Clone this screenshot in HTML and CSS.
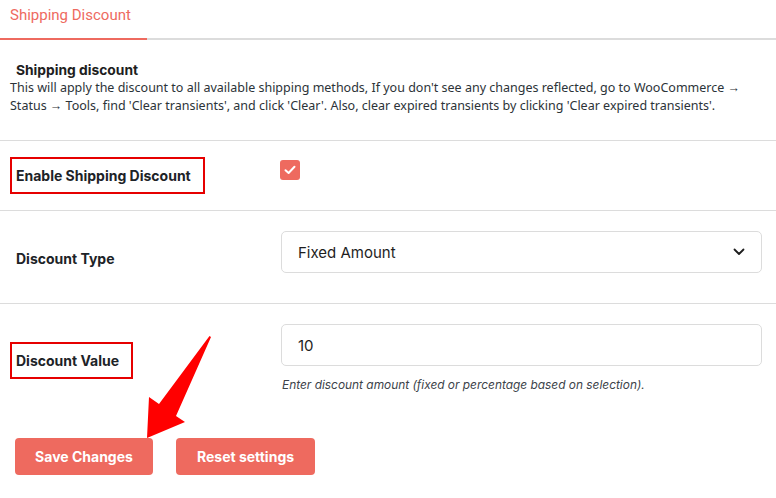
FILE: index.html
```html
<!DOCTYPE html>
<html>
<head>
<meta charset="utf-8">
<link rel="stylesheet" href="styles.css">
</head>
<body>
<div class="page">
  <nav class="tabs">
    <a class="tab active">Shipping Discount</a>
  </nav>
  <section class="intro">
    <h2 class="intro-title">Shipping discount</h2>
    <p class="intro-desc">This will apply the discount to all available shipping methods, If you don't see any changes reflected, go to WooCommerce &rarr; Status &rarr; Tools, find 'Clear transients', and click 'Clear'. Also, clear expired transients by clicking 'Clear expired transients'.</p>
  </section>
  <div class="row row-enable">
    <div class="label-cell"><span class="label boxed">Enable Shipping Discount</span></div>
    <div class="field-cell"><span class="checkbox"><svg width="12" height="10" viewBox="0 0 12 10"><path d="M1.5 5.2 L4.6 8 L10.5 1.8" fill="none" stroke="#fff" stroke-width="2" stroke-linecap="round" stroke-linejoin="round"/></svg></span></div>
  </div>
  <div class="row row-type">
    <div class="label-cell"><span class="label">Discount Type</span></div>
    <div class="field-cell">
      <div class="select"><span>Fixed Amount</span><svg width="12" height="8" viewBox="0 0 12 8"><path d="M1.5 1.5 L6 6 L10.5 1.5" fill="none" stroke="#1e1e1e" stroke-width="1.8" stroke-linecap="round" stroke-linejoin="round"/></svg></div>
    </div>
  </div>
  <div class="row row-value">
    <div class="label-cell"><span class="label boxed">Discount Value</span></div>
    <div class="field-cell">
      <div class="input">10</div>
      <p class="help">Enter discount amount (fixed or percentage based on selection).</p>
    </div>
  </div>
  <div class="actions">
    <button class="btn btn-save">Save Changes</button>
    <button class="btn btn-reset">Reset settings</button>
  </div>
  <svg class="arrow" width="80" height="120" viewBox="0 0 80 120"><path d="M62.5 6 L64 7 L29 86 L38 92 L0 108 L2 67 L12 74 Z" fill="#ff0000"/></svg>
</div>
</body>
</html>
```

FILE: styles.css
```css
* { box-sizing: border-box; }
html, body { margin: 0; padding: 0; background: #fff; }
.page { position: relative; width: 776px; height: 498px; overflow: hidden; font-family: Inter, "Liberation Sans", sans-serif; color: #1e1e1e; }
.tabs { height: 40px; border-bottom: 2px solid #dcdcdc; display: flex; }
.tab { display: block; width: 147px; height: 40px; padding: 5px 0 0 10px; border-bottom: 2px solid #ee6a5f; font-family: Roboto, sans-serif; font-size: 15px; color: #ee6a5f; line-height: 20px; }
.intro { padding: 21px 0 0 10px; height: 101px; border-bottom: 1px solid #dcdcdc; }
.intro-title { margin: 0 0 0 6px; font-family: Inter, sans-serif; font-size: 13.8px; font-weight: 700; line-height: 18px; color: #1e1e1e; }
.intro-desc { margin: 0; font-family: "Noto Sans", sans-serif; font-size: 12.5px; line-height: 18px; color: #2c3338; width: 745px; }
.row { display: flex; border-bottom: 1px solid #dcdcdc; }
.label-cell { width: 281px; padding-left: 16px; display: flex; align-items: center; }
.label { font-size: 14px; font-weight: 700; line-height: 17px; color: #1d2327; }
.boxed { border: 2px solid #e60000; padding: 8px 12px 8px 4px; margin-left: -6px; }
.row-enable { height: 70px; }
.row-enable .label-cell { padding-top: 0; }
.row-enable .field-cell { padding-top: 19px; }
.checkbox { display: flex; align-items: center; justify-content: center; width: 20px; height: 20px; margin-left: -1px; border-radius: 3px; background: #ee6a5f; }
.row-type { height: 93px; }
.row-type .label-cell { padding-top: 2px; }
.row-type .field-cell { padding-top: 20px; }
.select, .input { width: 481px; height: 42px; border: 1px solid #dcdcdc; border-radius: 5px; padding: 0 16px; display: flex; align-items: center; justify-content: space-between; font-size: 15px; color: #1e1e1e; }
.row-value { border-bottom: none; height: 120px; }
.row-value .label-cell { align-items: flex-start; padding-top: 38px; }
.row-value .field-cell { padding-top: 20px; }
.help { margin: 12px 0 0 1px; font-size: 11.9px; font-style: italic; color: #3c434a; line-height: 14px; }
.actions { display: flex; gap: 23px; padding: 14px 0 0 15px; }
.btn { height: 37px; border: none; border-radius: 4px; background: #ee6a5f; color: #fff; font-family: Inter, sans-serif; font-size: 14px; font-weight: 700; padding: 0; white-space: nowrap; cursor: pointer; }
.btn-save { width: 138px; }
.btn-reset { width: 139px; }
.arrow { position: absolute; left: 147px; top: 330px; }
```
